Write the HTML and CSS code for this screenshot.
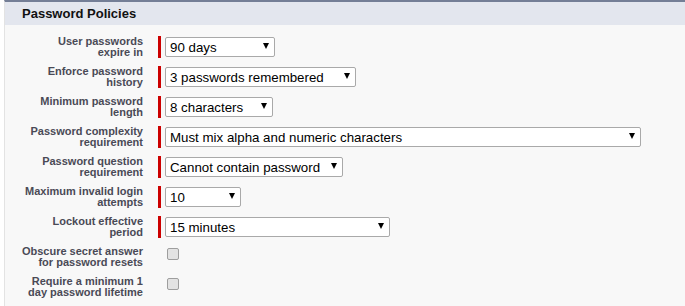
FILE: index.html
```html
<!DOCTYPE html>
<html lang="en">
<head>
  <meta charset="UTF-8" />
  <title>Password Policies</title>
  <link rel="stylesheet" href="styles.css">
</head>
<body>
  <div class="panel">
    <h2 class="panel-header">Password Policies</h2>

    <div class="panel-body">
      <div class="row">
        <label class="label">User passwords<br>expire in</label>
        <div class="field required">
          <span class="select-wrap">
            <select class="select w-110">
              <option>90 days</option>
            </select>
          </span>
        </div>
      </div>

      <div class="row">
        <label class="label">Enforce password<br>history</label>
        <div class="field required">
          <span class="select-wrap">
            <select class="select w-191">
              <option>3 passwords remembered</option>
            </select>
          </span>
        </div>
      </div>

      <div class="row">
        <label class="label">Minimum password<br>length</label>
        <div class="field required">
          <span class="select-wrap">
            <select class="select w-108">
              <option>8 characters</option>
            </select>
          </span>
        </div>
      </div>

      <div class="row">
        <label class="label">Password complexity<br>requirement</label>
        <div class="field required">
          <span class="select-wrap">
            <select class="select w-476">
              <option>Must mix alpha and numeric characters</option>
            </select>
          </span>
        </div>
      </div>

      <div class="row">
        <label class="label">Password question<br>requirement</label>
        <div class="field required">
          <span class="select-wrap">
            <select class="select w-178">
              <option>Cannot contain password</option>
            </select>
          </span>
        </div>
      </div>

      <div class="row">
        <label class="label">Maximum invalid login<br>attempts</label>
        <div class="field required">
          <span class="select-wrap">
            <select class="select w-76">
              <option>10</option>
            </select>
          </span>
        </div>
      </div>

      <div class="row">
        <label class="label">Lockout effective<br>period</label>
        <div class="field required">
          <span class="select-wrap">
            <select class="select w-225">
              <option>15 minutes</option>
            </select>
          </span>
        </div>
      </div>

      <div class="row">
        <label class="label">Obscure secret answer<br>for password resets</label>
        <div class="field field-check">
          <input type="checkbox" class="checkbox" />
        </div>
      </div>

      <div class="row">
        <label class="label">Require a minimum 1<br>day password lifetime</label>
        <div class="field field-check">
          <input type="checkbox" class="checkbox" />
        </div>
      </div>
    </div>
  </div>
</body>
</html>
```

FILE: styles.css
```css
html, body {
  margin: 0;
  padding: 0;
  background: #fff;
  font-family: "Liberation Sans", Arial, sans-serif;
}

.panel {
  margin-left: 4px;
  min-height: 304px;
  border-top: 2px solid #747e96;
  border-left: 1px solid #e3e3e3;
  background: #f8f8f8;
}

.panel-header {
  margin: 0;
  height: 23px;
  padding-left: 17px;
  background: #e3e6ee;
  font-size: 13px;
  line-height: 23px;
  font-weight: bold;
  color: #111;
}

.panel-body {
  padding-top: 11px;
}

.row {
  display: flex;
  align-items: flex-start;
  height: 30px;
}

.label {
  width: 138px;
  margin-right: 15px;
  text-align: right;
  font-size: 11px;
  line-height: 11px;
  font-weight: bold;
  color: #4a4a56;
}

.field {
  display: flex;
  align-items: center;
  height: 20px;
  padding: 1px 0 1px 4px;
  border-left: 3px solid transparent;
}

.field.required {
  border-left-color: #c00;
}

.field-check {
  align-items: flex-start;
}

.select-wrap {
  position: relative;
  display: block;
}

.select-wrap::after {
  content: "";
  position: absolute;
  top: 6px;
  right: 6px;
  border-left: 3px solid transparent;
  border-right: 3px solid transparent;
  border-top: 6px solid #000;
  pointer-events: none;
}

.select {
  appearance: none;
  -webkit-appearance: none;
  display: block;
  box-sizing: border-box;
  height: 20px;
  margin: 0;
  padding: 0 14px 0 4px;
  border: 1px solid #a9a9a9;
  border-radius: 2px;
  background: #fff;
  font-family: "Liberation Sans", Arial, sans-serif;
  font-size: 13.3px;
  color: #000;
}

.w-76 { width: 76px; }
.w-108 { width: 108px; }
.w-110 { width: 110px; }
.w-178 { width: 178px; }
.w-191 { width: 191px; }
.w-225 { width: 225px; }
.w-476 { width: 476px; }

.checkbox {
  appearance: none;
  -webkit-appearance: none;
  width: 12px;
  height: 12px;
  margin: 1px 0 0 2px;
  border: 1px solid #9e9e9e;
  border-radius: 2px;
  background: #e3e3e3;
}
```
